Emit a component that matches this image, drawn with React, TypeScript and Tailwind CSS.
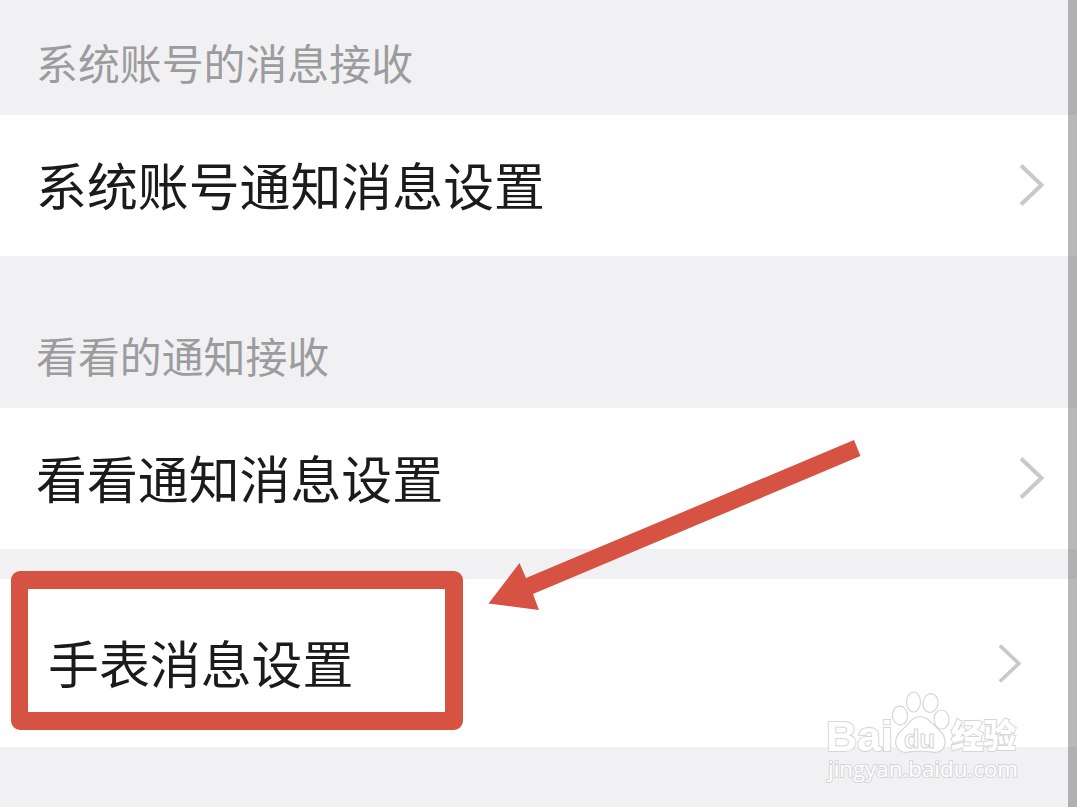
import { ReactNode } from "react";

function SectionTitle({ children }: { children: ReactNode }) {
  return (
    <h2 className="text-[41.9px] leading-[60px] whitespace-nowrap text-[#9c9c9e]">
      {children}
    </h2>
  );
}

function Chevron({ size }: { size: "sm" | "lg" }) {
  return (
    <svg
      viewBox="0 0 26 44"
      className={size === "lg" ? "h-[44px] w-[26px]" : "h-[41px] w-[24px]"}
      fill="none"
      stroke="#c9c9c9"
      strokeWidth="4"
    >
      <path d="M2 2.5 L22.5 22 L2 41.5" />
    </svg>
  );
}

function Watermark() {
  return (
    <svg
      viewBox="820 685 210 105"
      className="absolute top-[685px] left-[820px] h-[105px] w-[210px]"
      fill="#fff"
      stroke="#d6d6d7"
      strokeWidth="1.2"
    >
      <g strokeWidth="2" style={{ paintOrder: "stroke" }}>
        <text
          x="826"
          y="751"
          fontFamily="Liberation Sans, sans-serif"
          fontSize="43"
          fontWeight="700"
          textLength="67"
          lengthAdjust="spacingAndGlyphs"
        >
          Bai
        </text>
        <text
          x="951"
          y="748"
          fontSize="33"
          fontWeight="900"
          textLength="65"
          lengthAdjust="spacingAndGlyphs"
        >
          经验
        </text>
        <text
          x="828"
          y="777"
          fontFamily="Open Sans, sans-serif"
          fontSize="21.5"
          fontWeight="500"
          textLength="190"
          lengthAdjust="spacingAndGlyphs"
        >
          jingyan.baidu.com
        </text>
      </g>

      {/* Paw */}
      <ellipse cx="900" cy="715.5" rx="7.5" ry="9.5" transform="rotate(-8 900 715.5)" />
      <ellipse cx="913.5" cy="702" rx="7" ry="10" />
      <ellipse cx="930.5" cy="703" rx="7.5" ry="9.5" transform="rotate(8 930.5 703)" />
      <ellipse cx="941.5" cy="719.5" rx="7.5" ry="9.5" transform="rotate(-4 941.5 719.5)" />
      <path d="M920 716.5 C911 717 908 725 902 730 C895 736 894 744 898 749 C903 755 911 751 920 751 C929 751 938 755 943 749 C947 743 945 735 939 730 C932 724 929 717 920 716.5 Z" />
      <text
        x="904"
        y="747.5"
        fontFamily="Liberation Sans, sans-serif"
        fontSize="26"
        fontWeight="700"
        textLength="31"
        lengthAdjust="spacingAndGlyphs"
        strokeWidth="1.1"
      >
        du
      </text>
    </svg>
  );
}

export default function App() {
  return (
    <main className="relative flex h-[807px] w-[1077px] flex-col overflow-hidden bg-[#f1f1f3] font-['Noto_Sans_CJK_SC',sans-serif] text-[50.9px] leading-[72px] text-[#1b1b1b]">
      <div className="h-[115px] pt-[32px] pl-[36px]">
        <SectionTitle>系统账号的消息接收</SectionTitle>
      </div>
      <div className="flex h-[141px] items-center justify-between bg-white pr-[32px] pb-[2px] pl-[36px]">
        <span className="pb-px whitespace-nowrap">系统账号通知消息设置</span>
        <Chevron size="lg" />
      </div>

      <div className="h-[152px] pt-[69px] pl-[36px]">
        <SectionTitle>看看的通知接收</SectionTitle>
      </div>
      <div className="flex h-[141px] items-center justify-between bg-white pr-[32px] pb-[2px] pl-[36px]">
        <span className="pb-px whitespace-nowrap">看看通知消息设置</span>
        <Chevron size="lg" />
      </div>

      <div className="mt-[30px] flex h-[168px] items-center justify-between bg-white pr-[55px] pl-[48px]">
        <span className="pb-[2px] whitespace-nowrap">手表消息设置</span>
        <Chevron size="sm" />
      </div>

      {/* Highlight around the watch settings row */}
      <div className="absolute top-[571px] left-[11px] h-[159px] w-[452px] rounded-[9px] border-[18px] border-l-[17px] border-[#d65343]" />
      <svg
        viewBox="480 430 390 190"
        className="absolute top-[430px] left-[480px] h-[190px] w-[390px]"
        fill="#d65343"
      >
        <polygon points="488.5,603.5 519.5,563 526,578 854,440 860.5,456 533,594 539,610" />
      </svg>

      <Watermark />
      <div className="absolute inset-y-0 right-0 w-[9px] bg-[#555558]/42" />
    </main>
  );
}
